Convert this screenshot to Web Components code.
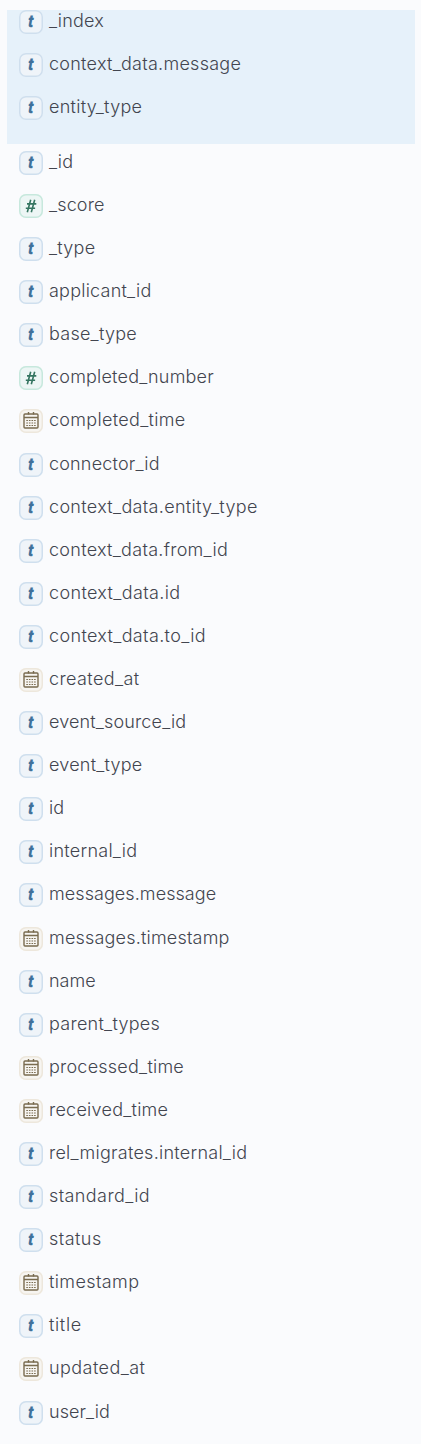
<!DOCTYPE html>
<html lang="en">
<head>
<meta charset="utf-8">
<title>Available fields</title>
<style>
html, body { margin: 0; background: #fafbfd; }
body { font-family: Inter, sans-serif; }
</style>
</head>
<body>
<field-sidebar></field-sidebar>
<script>
const BADGES = {
  string: '<span>t</span>',
  number: '<svg viewBox="0 0 24 24"><path d="M11.7 5.8 8.3 18.2M15.7 5.8 12.3 18.2M8 9.9h9.3M6.8 14.3h9.3" fill="none" stroke="#357561" stroke-width="1.6"/></svg>',
  date: '<svg viewBox="0 0 24 24"><g fill="none" stroke="#796b4f" stroke-width="1.4"><rect x="5" y="5" width="14" height="14" rx="1"/><path d="M5 8.5h14M9.5 3v2.6M14.5 3v2.6"/><path d="M7.3 11.5h9.4M7.3 14h9.4M7.3 16.5h9.4" stroke-dasharray="1.6 1" stroke-width="1.1"/></g></svg>'
};

class FieldToken extends HTMLElement {
  constructor() {
    super();
    const type = this.getAttribute('type');
    this.attachShadow({ mode: 'open' }).innerHTML = `<style>
      :host { display: flex; flex: none; box-sizing: border-box; width: 24px; height: 24px; box-shadow: inset 0 0 0 1.5px #cfdfee; border-radius: 7px; background: #eff4f9; align-items: center; justify-content: center; }
      :host([type=number]) { box-shadow: inset 0 0 0 1.5px #c7e8dd; background: #edf6f5; }
      :host([type=date]) { box-shadow: inset 0 0 0 1.5px #ede7dc; background: #f7f5f1; }
      svg { width: 24px; height: 24px; flex: none; }
      span { font: italic 800 17px/24px Inter, sans-serif; color: #41719b; transform: translate(-.4px, -.6px) scaleX(.85) skewX(-3deg); }
    </style>${BADGES[type]}`;
  }
}
customElements.define('field-token', FieldToken);

class FieldItem extends HTMLElement {
  constructor() {
    super();
    this.attachShadow({ mode: 'open' }).innerHTML = `<style>
      :host { display: flex; height: 43.1px; padding-left: 12px; gap: 6px; align-items: flex-start; }
      .name { font-size: 18px; line-height: 22px; font-weight: 350; letter-spacing: var(--tracking, 0); color: #42454f; white-space: nowrap; }
    </style><field-token type="${this.getAttribute('type')}"></field-token><span class="name"><slot></slot></span>`;
  }
}
customElements.define('field-item', FieldItem);

class FieldGroup extends HTMLElement {
  constructor() {
    super();
    this.attachShadow({ mode: 'open' }).innerHTML = `<style>
      :host { display: block; }
      :host([popular]) { background: #e6f1fa; height: 134px; margin-bottom: 6.85px; }
    </style><slot></slot>`;
  }
}
customElements.define('field-group', FieldGroup);

class FieldSidebar extends HTMLElement {
  constructor() {
    super();
    // Each entry: field name, extra width in px spread over its letters.
    const popular = [['_index', 1], ['context_data.message', 5], ['entity_type', 3]];
    const available = [['_id', .3], ['_score', .7], ['_type', 1], ['applicant_id', 2.5], ['base_type', 2], ['completed_number', 3], ['completed_time', 4], ['connector_id', 2], ['context_data.entity_type', 7.3], ['context_data.from_id', 5.4], ['context_data.id', 5], ['context_data.to_id', 6], ['created_at', 3.6], ['event_source_id', 2], ['event_type', 2], ['id', 0], ['internal_id', 2.6], ['messages.message', 1], ['messages.timestamp', 3.2], ['name', 0], ['parent_types', 3], ['processed_time', 3], ['received_time', 3], ['rel_migrates.internal_id', 6], ['standard_id', 4], ['status', 2.3], ['timestamp', 3.1], ['title', 2.6], ['updated_at', 4], ['user_id', .3]];
    const numbers = ['_score', 'completed_number'];
    const dates = ['completed_time', 'created_at', 'messages.timestamp', 'processed_time', 'received_time', 'timestamp', 'updated_at'];
    const typeOf = n => numbers.includes(n) ? 'number' : dates.includes(n) ? 'date' : 'string';
    const rows = list => list.map(([n, extra]) => `<field-item type="${typeOf(n)}" style="--tracking:${(extra / (n.length - 1)).toFixed(3)}px">${n}</field-item>`).join('');
    this.attachShadow({ mode: 'open' }).innerHTML = `<style>
      :host { display: block; box-sizing: border-box; height: 1444px; overflow: hidden; padding: 10px 6px 0 7px; }
    </style><field-group popular>${rows(popular)}</field-group><field-group>${rows(available)}</field-group>`;
  }
}
customElements.define('field-sidebar', FieldSidebar);
</script>
</body>
</html>
